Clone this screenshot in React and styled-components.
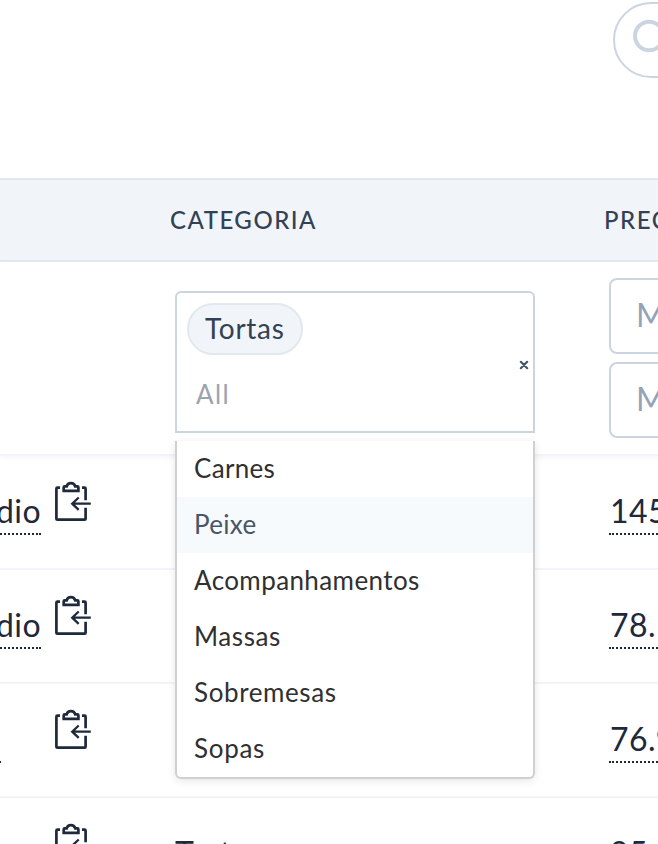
import React from "react";
import styled, { createGlobalStyle } from "styled-components";

const Global = createGlobalStyle`
  *, *::before, *::after { box-sizing: border-box; }
  body { margin: 0; background: #fff; overflow: hidden; font-family: Lato, "Open Sans", sans-serif; color: #1e293b; }
`;

const Page = styled.main`
  width: 658px;
  height: 844px;
  overflow: hidden;
  background: #fff;
`;

const Toolbar = styled.div`
  height: 178px;
  padding: 2px 0 0 613px;
`;

const Search = styled.div`
  width: 420px;
  height: 76px;
  border: 2px solid #cbd5e1;
  border-radius: 38px;
  padding: 14px 0 0 16px;
`;

const columns = "175px 434px 360px";

const HeaderRow = styled.div`
  display: grid;
  grid-template-columns: 170px 434px 360px;
  align-items: center;
  width: 964px;
  height: 84px;
  background: #f1f5f9;
  border-top: 2px solid #e2e8f0;
  border-bottom: 2px solid #e2e8f0;
`;

const HeaderCell = styled.div`
  font-size: 24px;
  line-height: 32px;
  font-weight: 500;
  letter-spacing: 1.5px;
  color: #334155;
`;

const FilterRow = styled.div`
  display: grid;
  grid-template-columns: ${columns};
  width: 969px;
  height: 194px;
  padding-top: 16px;
  border-bottom: 2px solid #f1f5f9;
  box-shadow: 0 2px 4px rgba(0, 0, 0, 0.04);
`;

const Picker = styled.div`
  position: relative;
  width: 360px;
  height: 142px;
  margin-top: 13px;
  border: 2px solid #cbd5e1;
  border-radius: 6px 6px 0 0;
  display: flex;
  align-items: center;
  justify-content: space-between;
  padding: 10px 4px 10px 10px;
  background: #fff;
`;

const PickerValues = styled.div`
  align-self: flex-start;
  display: flex;
  flex-direction: column;
  align-items: flex-start;
`;

const ClearIcon = styled.svg`
  margin-top: 6px;
`;

const Tag = styled.span`
  width: 116px;
  height: 52px;
  padding-left: 16px;
  border: 2px solid #e2e8f0;
  border-radius: 26px;
  background: #f1f5f9;
  color: #334155;
  font-size: 28px;
  line-height: 47px;
  letter-spacing: 0.7px;
`;

const Placeholder = styled.span`
  margin: 21px 0 0 9px;
  color: #9ca3af;
  font-size: 26px;
  line-height: 36px;
  letter-spacing: 1.4px;
`;

const Menu = styled.ul`
  position: absolute;
  z-index: 2;
  top: 148px;
  left: -2px;
  width: 360px;
  margin: 0;
  padding: 0;
  list-style: none;
  background: #fff;
  border: 2px solid #d0d0d0;
  border-top: 0;
  border-radius: 0 0 6px 6px;
  box-shadow: 0 2px 8px rgba(0, 0, 0, 0.1);
`;

const Option = styled.li`
  height: 56px;
  padding-left: 17px;
  font-size: 26px;
  line-height: 55px;
  letter-spacing: ${(p) => p.$tracking};
  color: ${(p) => (p.$active ? "#495568" : "#303030")};
  background: ${(p) => (p.$active ? "#f7fafc" : "transparent")};
`;

const Inputs = styled.div`
  display: flex;
  flex-direction: column;
  gap: 8px;
`;

const Input = styled.div`
  width: 240px;
  height: 76px;
  padding-left: 25px;
  border: 2px solid #cbd5e1;
  border-radius: 8px;
  color: #94a3b8;
  font-size: 32px;
  line-height: 70px;
`;

const Row = styled.div`
  display: grid;
  grid-template-columns: ${columns};
  width: 969px;
  height: 114px;
  padding-top: 26px;
  border-bottom: 2px solid #f1f5f9;
`;

const NameCell = styled.div`
  display: flex;
  justify-content: flex-end;
  width: 93px;
`;

const NameSlot = styled.div`
  display: flex;
  justify-content: flex-end;
  width: ${(p) => p.$width}px;
  margin-right: ${(p) => 53 - p.$width}px;
`;

const Editable = styled.span`
  flex: none;
  display: flex;
  justify-content: ${(p) => (p.$end ? "flex-end" : "flex-start")};
  width: 100px;
  height: 53px;
  padding-left: 1px;
  border-bottom: 2px dotted #1e293b;
  font-size: 32px;
  line-height: 58px;
  white-space: nowrap;
  letter-spacing: 0.4px;
`;

const Category = styled.span`
  font-size: 32px;
  line-height: 58px;
`;

const Clipboard = styled.svg`
  flex: none;
  margin-top: -1px;
`;

const ClipboardIcon = () => (
  <Clipboard width="40" height="42" viewBox="53 481 40 42" fill="none" stroke="#1e293b" strokeWidth="2.7">
    <path d="M60 487.7h-2.6q-1 0-1 1v30q0 1 1 1h27.2q1 0 1-1v-11M82 487.7h2.6q1 0 1 1v11.6" />
    <path d="M63.7 490.9v-3.5q0-1 1-1h2q.9-3.2 4.2-3.2t4.3 3.2h2.2q1 0 1 1v3.5z" />
    <path d="M90.8 503.7H72m6.7-6.2-6.5 6.2 6.5 6.2" strokeWidth="2.3" />
  </Clipboard>
);

const options = [
  ["Carnes", "0.3px"],
  ["Peixe", "0.3px"],
  ["Acompanhamentos", "0.4px"],
  ["Massas", "0.6px"],
  ["Sobremesas", "0.6px"],
  ["Sopas", "0.7px"],
];

const rows = [
  { name: "dio", nameEnd: 41, category: "", price: "145" },
  { name: "dio", nameEnd: 41, category: "", price: "78." },
  { name: "", nameEnd: 1, category: "", price: "76.9" },
  { name: "", nameEnd: 1, category: "Tortas", price: "95.5" },
];

export default function App() {
  return (
    <Page>
      <Global />
      <Toolbar>
        <Search>
          <svg width="44" height="44" viewBox="0 0 44 44" fill="none" stroke="#cbd5e1" strokeWidth="4">
            <circle cx="18.2" cy="18" r="14.2" />
            <path d="m28.5 28.5 11 11" strokeLinecap="round" />
          </svg>
        </Search>
      </Toolbar>
      <HeaderRow>
        <span />
        <HeaderCell>CATEGORIA</HeaderCell>
        <HeaderCell>PREÇO</HeaderCell>
      </HeaderRow>
      <FilterRow>
        <span />
        <Picker>
          <PickerValues>
            <Tag>Tortas</Tag>
            <Placeholder>All</Placeholder>
          </PickerValues>
          <ClearIcon width="10" height="10" viewBox="0 0 10 10" stroke="#475569" strokeWidth="2.2" strokeLinecap="round">
            <path d="m1.8 1.8 6.4 6.4m0-6.4L1.8 8.2" />
          </ClearIcon>
          <Menu>
            {options.map(([label, tracking]) => (
              <Option key={label} $tracking={tracking} $active={label === "Peixe"}>{label}</Option>
            ))}
          </Menu>
        </Picker>
        <Inputs>
          <Input>Min</Input>
          <Input>Max</Input>
        </Inputs>
      </FilterRow>
      {rows.map((r) => (
        <Row key={r.price}>
          <NameCell>
            <NameSlot $width={r.nameEnd}>
              <Editable $end>{r.name}</Editable>
            </NameSlot>
            <ClipboardIcon />
          </NameCell>
          <Category>{r.category}</Category>
          <Editable>{r.price}</Editable>
        </Row>
      ))}
    </Page>
  );
}
